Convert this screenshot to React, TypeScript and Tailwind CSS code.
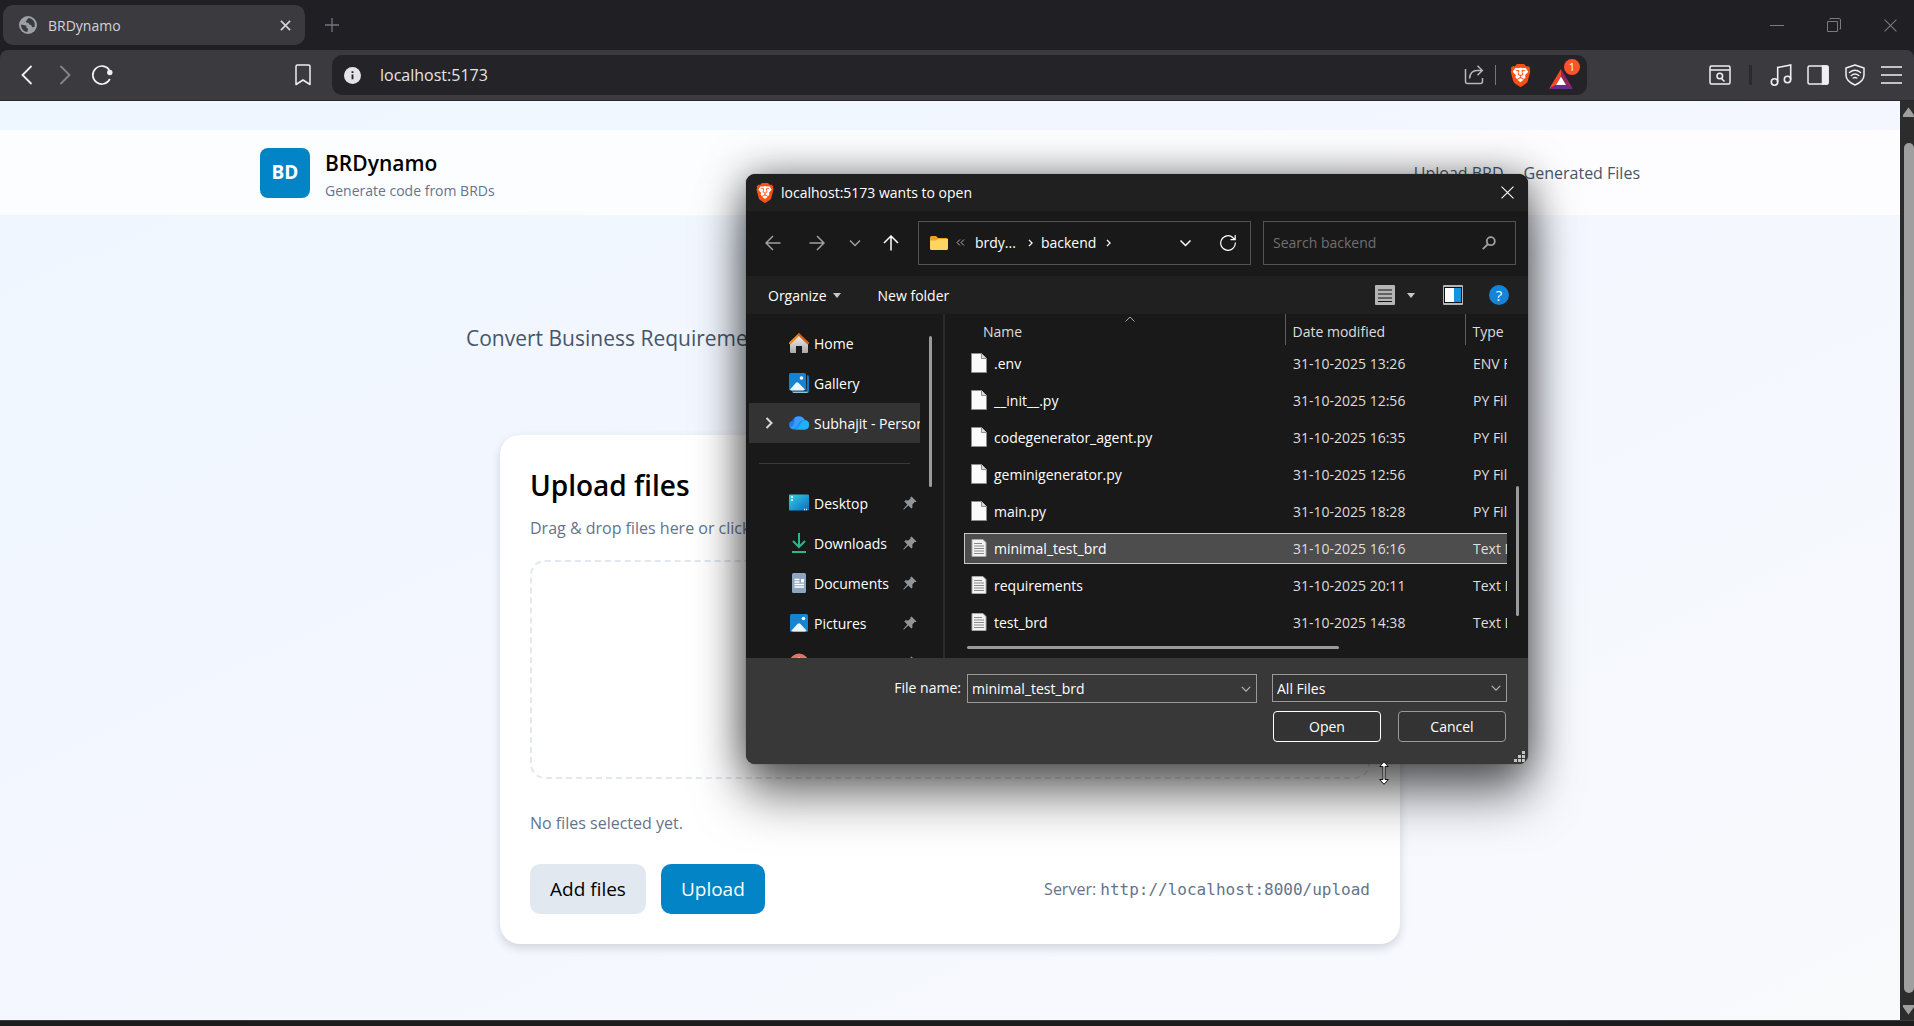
import React from "react";
import { SiBrave } from "react-icons/si";

type IconProps = { className?: string };

function BraveLogo({ className = "" }: IconProps) {
  return (
    <span className={`grid shrink-0 place-items-center ${className}`}>
      <svg viewBox="0 0 24 24" className="col-start-1 row-start-1 h-full w-full">
        <path d="M6 3.500h12l2.500 4.500-2.500 9-6 3-6-3L3.500 8z" fill="#fff" />
      </svg>
      <SiBrave className="col-start-1 row-start-1 h-full w-full text-[#fb4f14]" aria-hidden />
    </span>
  );
}

function Globe() {
  return (
    <svg viewBox="0 0 20 20" className="h-[18px] w-[18px] shrink-0">
      <circle cx="10" cy="10" r="10" fill="#9aa0a6" />
      <path d="M2.200 9.500c2 .2 3.600.6 5.200 1 .9.300 1 1.200.8 2-.1.800.7 1 1.300 1.200.6.300.5 1.200.3 1.800-.2.700-.4 1.700-.3 2.400A7.800 7.800 0 0 1 2.200 9.500z" fill="#3b3a3f" />
      <path d="M10.800 2.300c-1 .6-1.700 1.100-1.600 2 .1 1-1.700.9-1.800 1.900-.1 1 1.200 1.300 2.300 1.200 1.200-.1 1.300.9 1.500 1.600.3 1 1.600.7 2.300 1.200.8.600.4 1.800 1.500 2.200 1 .3 1.900-.3 2.600-1.100A7.800 7.800 0 0 0 10.800 2.300z" fill="#3b3a3f" />
    </svg>
  );
}

function Cross({ className = "" }: IconProps) {
  return (
    <svg viewBox="0 0 12 12" className={className} fill="none" stroke="currentColor">
      <path d="M.5.5l11 11M11.500.5l-11 11" />
    </svg>
  );
}

function Chevron({ className = "" }: IconProps) {
  return (
    <svg viewBox="0 0 12 12" className={className} fill="none" stroke="currentColor" strokeWidth="1.500">
      <path d="M1 3.500l5 5 5-5" />
    </svg>
  );
}

function ChevronRight({ className = "" }: IconProps) {
  return (
    <svg viewBox="0 0 8 12" className={`shrink-0 ${className}`} fill="none" stroke="currentColor" strokeWidth="2">
      <path d="M1.500 1l5 5-5 5" />
    </svg>
  );
}

function Arrow({ className = "" }: IconProps) {
  return (
    <svg viewBox="0 0 16 16" className={className} fill="none" stroke="currentColor" strokeWidth="1.500">
      <path d="M15.500 8H1M8 1L1 8l7 7" />
    </svg>
  );
}

function TabStrip() {
  return (
    <div className="flex h-[50px] shrink-0 items-center bg-[#201f24] pl-[3px] text-[#d4d4d8]">
      <div className="flex h-10 w-[302px] items-center gap-[11px] rounded-[10px] bg-[#3b3a3f] pr-[14px] pl-4">
        <Globe />
        <span className="flex-1 text-[14px]">BRDynamo</span>
        <button aria-label="Close tab">
          <svg viewBox="0 0 12 12" className="h-[11px] w-[11px]" stroke="currentColor" strokeWidth="1.800">
            <path d="M1 1l10 10M11 1L1 11" />
          </svg>
        </button>
      </div>
      <button aria-label="New tab" className="ml-5 text-[#77767b]">
        <svg viewBox="0 0 14 14" className="h-[14px] w-[14px]" stroke="currentColor" strokeWidth="1.300">
          <path d="M7 0v14M0 7h14" />
        </svg>
      </button>
      <div className="ml-auto flex items-center gap-[43px] pr-[17px] text-[#7b7a7f]">
        <button aria-label="Minimize" className="h-px w-[14px] bg-[#7b7a7f]" />
        <button aria-label="Restore">
          <svg viewBox="0 0 14 14" className="h-[14px] w-[14px]" fill="none" stroke="currentColor">
            <path d="M.5 3.500h10v10H.5zM3 1.500V.5h9A1.500 1.500 0 0 1 13.500 2v9h-1" />
          </svg>
        </button>
        <button aria-label="Close window"><Cross className="h-[13px] w-[13px]" /></button>
      </div>
    </div>
  );
}

function Toolbar() {
  return (
    <div className="bg-[#201f24]">
      <div className="flex h-[51px] items-center rounded-t-lg border-b border-[#29292c] bg-[#3b3a3f] text-[#f0f0f3]">
        <div className="flex w-[332px] shrink-0 items-center pr-[21px] pl-[21px]">
          <button aria-label="Back">
            <svg viewBox="0 0 12 20" className="h-5 w-3" fill="none" stroke="currentColor" strokeWidth="1.800">
              <path d="M10.500 1L1.500 10l9 9" />
            </svg>
          </button>
          <button aria-label="Forward" className="ml-[26px] text-[#86858a]">
            <svg viewBox="0 0 12 20" className="h-5 w-3" fill="none" stroke="currentColor" strokeWidth="1.800">
              <path d="M1.500 1l9 9-9 9" />
            </svg>
          </button>
          <button aria-label="Reload" className="ml-5">
            <svg viewBox="0 0 22 22" className="h-[22px] w-[22px]" fill="none" stroke="currentColor" strokeWidth="1.700">
              <path d="M18.900 15a9 9 0 1 1-.6-9" />
              <circle cx="18.800" cy="8.500" r="2.700" fill="currentColor" stroke="none" />
            </svg>
          </button>
          <button aria-label="Bookmark" className="ml-auto">
            <svg viewBox="0 0 16 22" className="h-[22px] w-4" fill="none" stroke="currentColor" strokeWidth="1.500" strokeLinejoin="round">
              <path d="M1 2.500A1.500 1.500 0 0 1 2.500 1h11A1.500 1.500 0 0 1 15 2.500V20.500l-7-4.500-7 4.500z" />
            </svg>
          </button>
        </div>
        <div className="flex h-10 min-w-0 flex-1 items-center rounded-[10px] bg-[#242328] pr-[7px] pl-3">
          <svg viewBox="0 0 18 18" className="mt-px h-[17px] w-[17px] shrink-0">
            <circle cx="9" cy="9" r="9" fill="#e4e3e8" />
            <path d="M9 8v5M9 4.500v1.800" stroke="#242328" strokeWidth="2" />
          </svg>
          <input aria-label="Address" defaultValue="localhost:5173" className="min-w-0 flex-1 bg-transparent pl-[19px] text-[16px] text-[#e4e3e8] outline-none" />
          <button aria-label="Share" className="text-[#b8b7bc]">
            <svg viewBox="0 0 20 20" className="h-5 w-5" fill="none" stroke="currentColor" strokeWidth="1.500">
              <path d="M1.500 4v12.500A2 2 0 0 0 3.500 18.500h13a2 2 0 0 0 2-2V13M5.500 13.500C6 8.500 9 5.500 13 5.500h5M13.500.8L18.300 5.500l-4.800 4.700" />
            </svg>
          </button>
          <span className="mx-[11px] h-5 w-px bg-[#77767b]" />
          <button aria-label="Brave Shields" className="ml-[2px]"><BraveLogo className="h-[23px] w-[23px]" /></button>
          <button aria-label="Rewards" className="relative ml-[17px] h-[32px] w-[31px]">
            <svg viewBox="0 0 24 20" className="mt-[8px] h-5 w-6">
              <path d="M12 0L0 20l7-4 5-9z" fill="#ff4724" />
              <path d="M12 0l12 20-7-4-5-9z" fill="#9e1f63" />
              <path d="M0 20h24l-7-4H7z" fill="#662d91" />
              <path d="M12 7.500L17 16H7z" fill="#fff" />
            </svg>
            <span className="absolute top-0 right-0 flex h-4 w-4 items-center justify-center rounded-full bg-[#fb542b] text-[11px] text-white">1</span>
          </button>
        </div>
        <div className="ml-[122px] flex items-center gap-[15px] pr-3">
          <button aria-label="Search tabs">
            <svg viewBox="0 0 22 20" className="h-5 w-[22px]" fill="none" stroke="currentColor" strokeWidth="1.500">
              <rect x="1" y="1" width="20" height="18" rx="1.500" />
              <path d="M1 5h20M12.500 13.500l3 3" />
              <circle cx="10.800" cy="11" r="2.800" />
            </svg>
          </button>
          <span className="mx-[3px] h-5 w-[3px] bg-[#2b2a2f]" />
          <button aria-label="Media">
            <svg viewBox="0 0 22 22" className="h-[22px] w-[22px]" fill="none" stroke="currentColor" strokeWidth="1.600">
              <circle cx="4.500" cy="18" r="3.200" />
              <circle cx="17.500" cy="15.500" r="3.200" />
              <path d="M7.700 18V3.500L20.700 1v14.500" />
            </svg>
          </button>
          <button aria-label="Sidebar">
            <svg viewBox="0 0 22 20" className="h-5 w-[22px]" fill="none" stroke="currentColor" strokeWidth="1.500">
              <rect x="1" y="1" width="20" height="18" rx="1.500" />
              <path d="M15.500 1H20a1 1 0 0 1 1 1v16a1 1 0 0 1-1 1h-4.500z" fill="currentColor" />
            </svg>
          </button>
          <button aria-label="VPN">
            <svg viewBox="0 0 22 22" className="h-[22px] w-[22px]" fill="none" stroke="currentColor" strokeWidth="1.500" strokeLinecap="round">
              <path d="M11 1l9 3v7c0 4-3 7.500-9 10-6-2.500-9-6-9-10V4z" strokeLinejoin="round" />
              <path d="M5.500 8.500c3.500-2.800 7.500-2.800 11 0M7.300 11.500c2.400-1.900 5-1.900 7.400 0M9.300 14c1.200-.8 2.200-.8 3.400 0" />
            </svg>
          </button>
          <button aria-label="Menu">
            <svg viewBox="0 0 21 18" className="h-[18px] w-[21px]" stroke="currentColor" strokeWidth="1.500">
              <path d="M0 1h21M0 9h21M0 17h21" />
            </svg>
          </button>
        </div>
      </div>
    </div>
  );
}

function WebPage() {
  return (
    <div className="flex-1 overflow-hidden bg-linear-to-br from-[#eef6ff] via-[#f4f7ff] to-[#f8fafc] pt-[29px] text-black">
      <header className="bg-white/80">
        <div className="mx-auto flex h-[85px] max-w-[1380px] items-center">
          <div className="flex h-[50px] w-[50px] items-center justify-center rounded-lg bg-[#0284c7] text-[19px] font-bold text-white">BD</div>
          <div className="mt-1 ml-[15px]">
            <div className="text-[21px] leading-7 font-semibold">BRDynamo</div>
            <div className="mt-1 text-[14px] leading-5 text-[#64748b]">Generate code from BRDs</div>
          </div>
          <nav className="ml-auto flex gap-5 text-[16px] text-[#475569]">
            <a href="#upload">Upload BRD</a>
            <a href="#files">Generated Files</a>
          </nav>
        </div>
      </header>
      <main>
        <p className="mx-auto mt-[105px] max-w-[968px] text-[21px] leading-9 text-[#475569]">Convert Business Requirements</p>
        <section id="upload" className="mx-auto mt-[79px] max-w-[900px] rounded-[20px] bg-white p-[30px] shadow-[0_4px_10px_rgba(15,23,42,0.16)]">
          <h2 className="mt-[2px] text-[28px] leading-9 font-semibold">Upload files</h2>
          <p className="mt-[13px] text-[16px] leading-6 text-[#64748b]">Drag &amp; drop files here or click</p>
          <div className="mt-5 h-[219px] rounded-[15px] border-2 border-dashed border-[#e2e8f0]" />
          <p className="mt-8 text-[16px] leading-6 text-[#64748b]">No files selected yet.</p>
          <div className="mt-[29px] flex items-center gap-[15px]">
            <button className="h-[50px] rounded-[10px] bg-[#e2e8f0] px-5 text-[19px]">Add files</button>
            <button className="h-[50px] rounded-[10px] bg-[#0284c7] px-5 text-[19px] font-medium text-white">Upload</button>
            <div className="ml-auto text-[16px] text-[#64748b]">
              Server: <code className="font-['DejaVu_Sans_Mono',monospace] text-[16px]">http://localhost:8000/upload</code>
            </div>
          </div>
        </section>
      </main>
    </div>
  );
}

function PageScrollbar() {
  return (
    <div className="flex w-[14px] shrink-0 flex-col items-end bg-[#2c2c2c] text-[#9f9f9f]">
      <svg viewBox="0 0 11 10" className="mt-[6px] h-[10px] w-[11px]" fill="currentColor"><path d="M0 10V8l5-7q.5-1 1 0l5 7v2z" /></svg>
      <div className="mt-[26px] mb-3 w-[10px] flex-1 rounded-full bg-[#9f9f9f]" />
      <svg viewBox="0 0 11 10" className="mb-[5px] h-[10px] w-[11px]" fill="currentColor"><path d="M0 0v2l5 7q.5 1 1 0l5-7V0z" /></svg>
    </div>
  );
}

function HomeIcon() {
  return (
    <svg viewBox="0 0 20 20" className="h-5 w-5 shrink-0">
      <defs>
        <linearGradient id="wall" x1="0" y1="0" x2="0" y2="1"><stop stopColor="#f2f2f2" /><stop offset="1" stopColor="#a9a9a9" /></linearGradient>
      </defs>
      <path d="M1 9l9-7 9 7v10a1 1 0 0 1-1 1h-5v-7H7v7H2a1 1 0 0 1-1-1z" fill="url(#wall)" />
      <path d="M10 1.500L1.200 10.200" stroke="#f08a24" strokeWidth="2.400" strokeLinecap="round" />
      <path d="M10 1.500l8.800 8.700" stroke="#cf6217" strokeWidth="2.400" strokeLinecap="round" />
    </svg>
  );
}

function PictureIcon({ stacked = false }: { stacked?: boolean }) {
  return stacked ? (
    <svg viewBox="0 0 20 20" className="h-5 w-5 shrink-0">
      <path d="M18 2a2 2 0 0 1 2 2v14a2 2 0 0 1-2 2l-.5-2z" fill="#1674b8" />
      <path d="M3 18.500h15.500V20H5a2 2 0 0 1-2-1.500z" fill="#8fc4e4" />
      <rect width="17" height="17.500" rx="1.500" fill="#1583cf" />
      <path d="M1 16.500l6-6.700q1.200-1.300 2.400 0l6.600 6.700q-1 1-2 1H3q-1.500 0-2-1z" fill="#e9f6ff" />
      <circle cx="12.500" cy="5" r="1.800" fill="#fff" />
    </svg>
  ) : (
    <svg viewBox="0 0 20 20" className="h-5 w-5 shrink-0">
      <rect x="1" y="1" width="18" height="18" rx="1.500" fill="#1583cf" />
      <path d="M2.500 17.500l6.200-6.700q1.300-1.300 2.600 0l6.200 6.700q-1 1-2 1h-11q-1.500 0-2-1z" fill="#e9f6ff" />
      <circle cx="14.500" cy="5.500" r="1.800" fill="#fff" />
    </svg>
  );
}

function CloudIcon() {
  return (
    <svg viewBox="0 0 20 20" className="h-5 w-5 shrink-0">
      <defs>
        <linearGradient id="cloud" x1="0" y1="0" x2="1" y2="1"><stop stopColor="#1c62e8" /><stop offset="1" stopColor="#22b4f8" /></linearGradient>
      </defs>
      <path d="M4.500 16.500A4.500 4.500 0 0 1 3.300 7.700 6.800 6.800 0 0 1 15.700 7a4.800 4.800 0 0 1 .3 9.500z" fill="url(#cloud)" />
      <path d="M6 4.500a6.800 6.800 0 0 1 9.700 2.500C11 7 10 10 7.500 13.500 6 15.500 3 16 1.500 15 7 12 5 7 6 4.500z" fill="#3b9dfa" />
      <path d="M5 16.500c3 0 4-1.500 5.500-4C12 10 13.500 7.500 16.500 7.300A4.700 4.700 0 0 1 16 16.500z" fill="#1fb0fb" />
    </svg>
  );
}

function DesktopIcon() {
  return (
    <svg viewBox="0 0 20 20" className="h-5 w-5 shrink-0">
      <defs>
        <linearGradient id="desk" x1="0" y1="0" x2="1" y2="1"><stop stopColor="#35cfe0" /><stop offset="1" stopColor="#0a6cc4" /></linearGradient>
      </defs>
      <rect y="1.500" width="20" height="16" rx="1" fill="url(#desk)" />
      <path d="M2 4h2M2 7h2M15 16.500h1M17 16.500h1" stroke="#fff" strokeWidth="1.600" />
    </svg>
  );
}

function DownloadIcon() {
  return (
    <svg viewBox="0 0 20 20" className="h-5 w-5 shrink-0" fill="none" stroke="#2fb58c" strokeWidth="2">
      <path d="M10 0v13M4 8l6 6 6-6M3 19h14" />
    </svg>
  );
}

function DocumentIcon() {
  return (
    <svg viewBox="0 0 20 20" className="h-5 w-5 shrink-0">
      <rect x="3" width="14" height="20" rx="1.500" fill="#8ea5c0" />
      <path d="M5.500 6.500h5M5.500 9h5M5.500 11.500h9.500M5.500 14h9.500" stroke="#fff" strokeWidth="1.300" />
      <path d="M12 6h3v3.500h-3z" fill="#fff" />
    </svg>
  );
}

function MusicIcon() {
  return (
    <svg viewBox="0 0 20 20" className="h-5 w-5 shrink-0">
      <circle cx="10" cy="10" r="9.500" fill="#e2765c" />
      <path d="M10 4.500V13" stroke="#fff" strokeWidth="1.500" />
    </svg>
  );
}

function PinIcon() {
  return (
    <svg viewBox="0 0 14 14" className="h-[14px] w-[14px] shrink-0" fill="#8f979d">
      <path d="M8.500.5l5 5-1 .8-1-.2-2.200 2.600.2 2.800-1.200 1-3-3L1 13.500H.3V13l4-4.500-3-3 1-1.200 2.900.2L7.700 2.300l-.2-1z" />
    </svg>
  );
}

function PageIcon({ text }: { text: boolean }) {
  return (
    <svg viewBox="0 0 16 20" className="mb-[2px] h-5 w-4 shrink-0">
      {text ? (
        <>
          <path d="M1 1.500h11l3 3v14H1z" fill="#f4f4f4" stroke="#a8a8a8" />
          <path d="M3 5.500h8M3 8h10M3 10.500h10M3 13h10M3 15.500h10" stroke="#8a8a8a" />
        </>
      ) : (
        <>
          <path d="M.5.500h10l5 5v14H.5z" fill="#fbfbfb" stroke="#8d8d8d" />
          <path d="M10.500.5v5h5" fill="#ddd" stroke="#8d8d8d" />
        </>
      )}
    </svg>
  );
}

const places = [
  { name: "Desktop", icon: <DesktopIcon /> },
  { name: "Downloads", icon: <DownloadIcon /> },
  { name: "Documents", icon: <DocumentIcon /> },
  { name: "Pictures", icon: <PictureIcon /> },
  { name: "", icon: <MusicIcon /> },
];

const files = [
  { name: ".env", date: "31-10-2025 13:26", type: "ENV File" },
  { name: "__init__.py", date: "31-10-2025 12:56", type: "PY File" },
  { name: "codegenerator_agent.py", date: "31-10-2025 16:35", type: "PY File" },
  { name: "geminigenerator.py", date: "31-10-2025 12:56", type: "PY File" },
  { name: "main.py", date: "31-10-2025 18:28", type: "PY File" },
  { name: "minimal_test_brd", date: "31-10-2025 16:16", type: "Text Document", selected: true },
  { name: "requirements", date: "31-10-2025 20:11", type: "Text Document" },
  { name: "test_brd", date: "31-10-2025 14:38", type: "Text Document" },
];

function Sidebar() {
  return (
    <aside className="flex w-[199px] shrink-0 border-r-2 border-[#2b2b2b] pl-[3px]">
      <ul className="w-[171px] overflow-hidden pt-[9px] whitespace-nowrap">
        <li className="flex h-10 items-center gap-[5px] pl-10"><HomeIcon />Home</li>
        <li className="flex h-10 items-center gap-[5px] pl-10"><PictureIcon stacked />Gallery</li>
        <li className="flex h-10 items-center gap-[5px] bg-[#333] pl-4">
          <ChevronRight className="mr-[11px] h-3 w-2 text-[#d8d8d8]" />
          <CloudIcon />
          Subhajit - Personal
        </li>
        <li className="flex h-10 items-center px-[10px]"><hr className="w-full border-[#3a3a3a]" /></li>
        {places.map((place) => (
          <li key={place.name} className="flex h-10 items-center gap-[5px] pr-[3px] pl-10">
            {place.icon}
            <span className="flex-1">{place.name}</span>
            <PinIcon />
          </li>
        ))}
      </ul>
      <div className="mt-[22px] ml-[9px] h-[151px] w-[3px] rounded-full bg-[#9a9a9a]" />
    </aside>
  );
}

function FileList() {
  return (
    <div className="relative min-w-0 flex-1 pr-[21px] pl-[19px]">
      <div className="overflow-hidden">
        <table className="w-[640px] table-fixed border-collapse text-left whitespace-nowrap">
          <colgroup>
            <col className="w-[321px]" />
            <col className="w-[180px]" />
            <col />
          </colgroup>
          <thead>
            <tr className="h-[31px] text-[#dedede]">
              <th className="relative pt-1 pl-[19px] font-normal">
                Name
                <svg viewBox="0 0 10 6" className="absolute top-[2px] left-[161px] h-[6px] w-[10px]" fill="none" stroke="#aaa"><path d="M.5 5.500L5 1l4.500 4.500" /></svg>
              </th>
              <th className="border-l border-[#5c5c5c] pt-1 pl-[7px] font-normal">Date modified</th>
              <th className="border-l border-[#5c5c5c] pt-1 pl-[7px] font-normal">Type</th>
            </tr>
          </thead>
          <tbody>
            {files.map((file) => {
              const cell = file.selected
                ? "flex h-[31px] items-center border-y border-[#c9c9c9] bg-[#4d4d4d]"
                : "flex h-[31px] items-center";
              return (
                <tr key={file.name} className="h-[37px]">
                  <td className="p-0">
                    <div className={`${cell} gap-[7px] ${file.selected ? "border-l pl-[6px]" : "pl-[7px]"}`}>
                      <PageIcon text={file.type.startsWith("Text")} />
                      <span>{file.name}</span>
                    </div>
                  </td>
                  <td className="p-0 text-[#dedede]"><div className={`${cell} pl-2`}>{file.date}</div></td>
                  <td className="p-0 text-[#dedede]"><div className={`${cell} pl-2`}>{file.type}</div></td>
                </tr>
              );
            })}
          </tbody>
        </table>
      </div>
      <div className="absolute top-[172px] right-[9px] h-[130px] w-[3px] rounded-full bg-[#9a9a9a]" />
      <div className="absolute bottom-[9px] left-[22px] h-[3px] w-[372px] rounded-full bg-[#9a9a9a]" />
    </div>
  );
}

function FileDialog() {
  return (
    <div
      role="dialog"
      aria-label="localhost:5173 wants to open"
      className="absolute top-[174px] left-[746px] w-[782px] rounded-[9px] text-[14px] text-white shadow-[0_32px_50px_rgba(0,0,0,0.5),0_2px_40px_rgba(0,0,0,0.5),0_0_1px_rgba(0,0,0,0.6)]"
    >
      <div className="overflow-hidden rounded-[9px] bg-[#191919]">
        <div className="flex h-[37px] items-center bg-[#202020] pr-[14px] pl-[9px]">
          <BraveLogo className="h-5 w-5" />
          <span className="ml-[6px] flex-1">localhost:5173 wants to open</span>
          <button aria-label="Close"><Cross className="h-[13px] w-[13px]" /></button>
        </div>
        <div className="flex h-[65px] items-center pr-3 pb-[2px] pl-[19px]">
          <div className="flex flex-1 items-center text-[#a0a0a0]">
            <button aria-label="Back"><Arrow className="h-4 w-4" /></button>
            <button aria-label="Forward" className="ml-7"><Arrow className="h-4 w-4 rotate-180" /></button>
            <button aria-label="Recent locations" className="ml-6"><Chevron className="h-3 w-3" /></button>
            <button aria-label="Up" className="ml-[22px] text-white"><Arrow className="h-4 w-4 rotate-90" /></button>
          </div>
          <div className="flex h-11 w-[333px] items-center border border-[#535353] pr-[14px] pl-[11px]">
            <svg viewBox="0 0 18 14" className="h-[14px] w-[18px]">
              <path d="M0 1.500A1.500 1.500 0 0 1 1.500 0H6l2 2h8.500A1.500 1.500 0 0 1 18 3.500V6H0z" fill="#e8a520" />
              <path d="M0 4.500h6l2-1.500h10v9.500a1.500 1.500 0 0 1-1.500 1.500h-15A1.500 1.500 0 0 1 0 12.500z" fill="#ffd460" />
            </svg>
            <svg viewBox="0 0 9 7" className="ml-2 h-[7px] w-[9px]" fill="none" stroke="#b0b0b0"><path d="M4 .5l-3 3 3 3M8 .5l-3 3 3 3" /></svg>
            <span className="ml-[10px]">brdy...</span>
            <ChevronRight className="ml-3 h-2 w-[5px]" />
            <span className="ml-2">backend</span>
            <ChevronRight className="ml-[10px] h-2 w-[5px]" />
            <button aria-label="Previous locations" className="ml-auto"><Chevron className="h-3 w-[13px]" /></button>
            <button aria-label="Refresh" className="ml-[28px]">
              <svg viewBox="0 0 16 16" className="h-4 w-4" fill="none" stroke="currentColor" strokeWidth="1.200">
                <path d="M15.300 7.500A7.300 7.300 0 1 1 13 2.700L15 4.500M15.200 0v4.700h-4.700" />
              </svg>
            </button>
          </div>
          <label className="ml-3 flex h-11 w-[253px] items-center border border-[#535353] pr-[19px] pl-[9px]">
            <input aria-label="Search backend" placeholder="Search backend" className="min-w-0 flex-1 bg-transparent outline-none placeholder:text-[#707070]" />
            <svg viewBox="0 0 14 14" className="h-[14px] w-[14px]" fill="none" stroke="#a0a0a0" strokeWidth="1.800">
              <circle cx="8.800" cy="5.200" r="4" /><path d="M6 8L.8 13.200" />
            </svg>
          </label>
        </div>
        <div className="flex h-[38px] items-center bg-[#202020] pr-[19px] pl-[22px]">
          <button className="flex items-center gap-[6px]">
            Organize
            <svg viewBox="0 0 8 5" className="h-[5px] w-2" fill="#c8c8c8"><path d="M0 0h8L4 5z" /></svg>
          </button>
          <button className="ml-[37px]">New folder</button>
          <button aria-label="Change view" className="ml-auto flex items-center gap-3">
            <svg viewBox="0 0 20 20" className="h-5 w-5"><rect width="20" height="20" rx="1" fill="#b5b5b5" /><path d="M3 5h14M3 9h14M3 13h14M3 16.500h14" stroke="#111" strokeWidth="1.200" /></svg>
            <svg viewBox="0 0 8 5" className="h-[5px] w-2" fill="#c8c8c8"><path d="M0 0h8L4 5z" /></svg>
          </button>
          <button aria-label="Preview pane" className="ml-7">
            <svg viewBox="0 0 20 20" className="h-5 w-5"><rect width="20" height="20" rx="1" fill="#b5b5b5" /><path d="M1 2h18v16H1z" fill="#111" /><path d="M2 3h9v14H2z" fill="#fff" /><path d="M11 3h7v14h-7z" fill="#1493e0" /></svg>
          </button>
          <button aria-label="Help" className="ml-[26px] flex h-5 w-5 items-center justify-center rounded-full bg-[#1583d8] text-[15px]">?</button>
        </div>
        <div className="flex h-[344px] overflow-hidden">
          <Sidebar />
          <FileList />
        </div>
        <div className="relative h-[106px] bg-[#383838] pt-4 pr-[21px]">
          <div className="flex items-start justify-end">
            <label htmlFor="file-name" className="mr-[6px] leading-7">File name:</label>
            <div className="flex h-[29px] w-[290px] items-center border border-[#9a9a9a] pr-[5px] pl-1">
              <input id="file-name" defaultValue="minimal_test_brd" className="min-w-0 flex-1 bg-transparent outline-none" />
              <Chevron className="h-[10px] w-[10px] text-[#b5b5b5]" />
            </div>
            <div className="relative ml-[15px] flex h-[28px] w-[235px] items-center border border-[#9a9a9a] bg-[#333]">
              <select aria-label="File type" className="h-full w-full appearance-none bg-transparent pl-1 outline-none"><option>All Files</option></select>
              <Chevron className="pointer-events-none absolute right-[5px] h-[10px] w-[10px] text-[#b5b5b5]" />
            </div>
          </div>
          <div className="mt-2 flex justify-end gap-[17px] pr-px">
            <button className="h-[31px] w-[108px] rounded-[4px] border border-white bg-[#333]">Open</button>
            <button className="h-[31px] w-[108px] rounded-[4px] border border-[#9a9a9a] bg-[#333]">Cancel</button>
          </div>
          <svg viewBox="0 0 11 11" className="absolute right-[3px] bottom-[2px] h-[11px] w-[11px]" fill="#c4c4c4">
            <path d="M8 0h3v3H8zM4 4h3v3H4zM8 4h3v3H8zM0 8h3v3H0zM4 8h3v3H4zM8 8h3v3H8z" />
          </svg>
        </div>
      </div>
      <svg viewBox="0 0 10 24" className="absolute top-[587px] left-[633px] h-6 w-[10px]" fill="#fff" stroke="#111">
        <path d="M5 .7L9.300 5.500H6v13h3.300L5 23.300.7 18.500H4v-13H.7z" />
      </svg>
    </div>
  );
}

export default function App() {
  return (
    <div className="relative flex h-screen flex-col overflow-hidden font-['Open_Sans','Noto_Sans',sans-serif]">
      <TabStrip />
      <Toolbar />
      <div className="flex min-h-0 flex-1">
        <WebPage />
        <PageScrollbar />
      </div>
      <div className="h-[6px] shrink-0 border-t border-[#3a3a3a] bg-[#1c1c1c]" />
      <FileDialog />
    </div>
  );
}
